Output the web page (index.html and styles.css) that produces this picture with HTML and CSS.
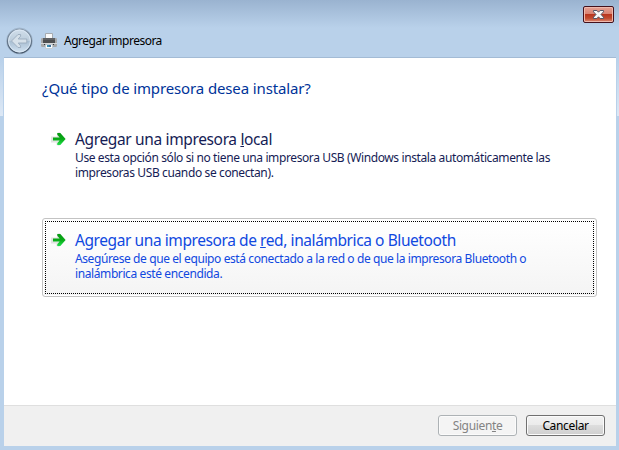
FILE: index.html
```html
<!DOCTYPE html>
<html lang="es">
<head>
<meta charset="utf-8">
<title>Agregar impresora</title>
<link rel="stylesheet" href="styles.css">
</head>
<body>
<div class="window">
  <div class="caption">
    <button class="close" aria-label="Cerrar">
      <svg width="13" height="11" viewBox="0 0 13 11"><path d="M1.500 1.500h3.400l1.600 1.700 1.600-1.700h3.400v1.300L9 5.500l2.500 2.700v1.300H8.100L6.500 7.800 4.900 9.500H1.500V8.200L4 5.500 1.500 2.800z" fill="#f8f8f8" stroke="#535666"/></svg>
    </button>
  </div>
  <header class="header">
    <svg class="back" width="28" height="28" viewBox="0 0 28 28">
      <defs>
        <linearGradient id="disc" x1="0" y1="0" x2="0" y2="1"><stop offset="0" stop-color="#d2dfeb"/><stop offset=".48" stop-color="#bccddc"/><stop offset=".52" stop-color="#a9bfd3"/><stop offset="1" stop-color="#d3e4f3"/></linearGradient>
        <linearGradient id="ring" x1="0" y1="0" x2="0" y2="1"><stop offset="0" stop-color="#8b9cae"/><stop offset="1" stop-color="#44566a"/></linearGradient>
      </defs>
      <circle cx="14.500" cy="14" r="13" fill="none" stroke="#a3b9d0" stroke-width="1"/>
      <circle cx="14.500" cy="14" r="12" fill="url(#disc)" stroke="url(#ring)" stroke-width="1.200"/>
      <circle cx="14.500" cy="14" r="10.900" fill="none" stroke="#dce9f5" stroke-width=".9"/>
      <path d="M6.500 14l6.500-6.500h2.600v1.700L13.200 12h8.600v4h-8.600l2.400 2.800v1.700H13z" fill="#d6e1ea" stroke="#9bacbd" stroke-width=".9"/>
    </svg>
    <svg class="printer" width="16" height="17" viewBox="0 0 16 17">
      <path d="M4.500 6V.5h7V6" fill="#fafafa" stroke="#a6abb0"/>
      <rect x="0" y="5" width="16" height="9" rx="1.200" fill="#a7a9aa"/>
      <rect x="2" y="5" width="12" height="5" fill="#4c4e50"/>
      <path d="M2 6h12" stroke="#737578"/>
      <path d="M0 10.500h16" stroke="#d5d7d8"/>
      <path d="M3 11.500h10" stroke="#35373a"/>
      <path d="M4.500 11.500h7v4h-7z" fill="#f7fbfd" stroke="#c3cbd1"/>
      <path d="M6 12h2v2H6z" fill="#3a91b4"/><path d="M8 12h2v2H8z" fill="#3d6f9b"/>
    </svg>
    <span class="title">Agregar impresora</span>
  </header>
  <main class="page">
    <h1>¿Qué tipo de impresora desea instalar?</h1>
    <div class="option">
      <div class="choice">
        <svg class="arrow" width="16" height="16" viewBox="0 0 16 16"><use href="#arrow"/></svg>
        <div>
          <h2 class="t1">Agregar una impresora <u>l</u>ocal</h2>
          <p><span class="d1">Use esta opción sólo si no tiene una impresora USB (Windows instala automáticamente las</span><br><span class="d2">impresoras USB cuando se conectan).</span></p>
        </div>
      </div>
    </div>
    <div class="option focused">
      <div class="choice">
        <svg class="arrow" width="16" height="16" viewBox="0 0 16 16">
          <defs><linearGradient id="green" x1="0" y1="0" x2="0" y2="1"><stop offset="0" stop-color="#079a13"/><stop offset=".5" stop-color="#08a916"/><stop offset="1" stop-color="#1ee24a"/></linearGradient></defs>
          <g id="arrow">
            <path d="M0 5.500h6V2l2.500-1 6 7-6.500 7-2.500-1v-2.500H0z" fill="#cfd3cf" opacity=".6"/>
            <path d="M2 6.500h6.600L6.300 3.800V2h3L14.600 8l-5.300 6h-3v-1.800l2.300-2.700H2z" fill="url(#green)"/>
          </g>
        </svg>
        <div>
          <h2 class="t2">Agregar una impresora de <u>r</u>ed, inalámbrica o Bluetooth</h2>
          <p><span class="d3">Asegúrese de que el equipo está conectado a la red o de que la impresora Bluetooth o</span><br><span class="d4">inalámbrica esté encendida.</span></p>
        </div>
      </div>
    </div>
  </main>
  <footer class="footer">
    <button class="btn" disabled><span>Siguien<u>t</u>e</span></button>
    <button class="btn"><span>Cancelar</span></button>
  </footer>
</div>
</body>
</html>
```
FILE: styles.css
```css
* { box-sizing: border-box; }
body { margin: 0; font-family: "Noto Sans", "Open Sans", sans-serif; font-size: 12px; overflow: hidden; }
h1, h2, p { margin: 0; font-weight: 400; white-space: nowrap; }
.window {
  width: 619px; height: 450px; padding: 0 3px 4px 4px;
  display: flex; flex-direction: column;
  background:
    linear-gradient(#b9d1ea, #dde8f5) 0 58px / 3px 58px no-repeat,
    linear-gradient(#b9d1ea, #dde8f5) 100% 58px / 2px 58px no-repeat,
    linear-gradient(#9ab3d0 0, #b9d1ea 28px, #b9d1ea 100%);
}
.caption { height: 27px; padding: 6px 2px 0 0; display: flex; justify-content: flex-end; }
.close {
  width: 31px; height: 17px; padding: 0; display: flex; align-items: center; justify-content: center;
  border: 1px solid #43111d; border-radius: 2px;
  box-shadow: inset 0 0 0 1px #efb9ad;
  background: linear-gradient(#e5a195 0, #d98373 45%, #b9361f 50%, #c14b30 75%, #dc8d78 100%);
}
.header { height: 31px; display: flex; align-items: center; padding-left: 1px; border-bottom: 1px solid #a3bbd5; }
.back { margin-top: -2px; }
.printer { margin: -1px 0 0 8px; }
.title { margin: -3px 0 0 7px; color: #000; letter-spacing: -.5px; }
.page { flex: 1; background: #fff; padding: 19px 19px 0 38px; }
h1 { font-size: 15px; line-height: 22px; height: 40px; color: #039; letter-spacing: -.13px; }
.option { height: 79px; border: 1px solid transparent; border-radius: 3px; padding: 2px; margin-bottom: 22px; color: #151c55; }
.choice { height: 73px; border: 1px dotted transparent; display: flex; padding: 7px 0 0 5px; }
.focused { border-color: #c3c3c3; background: linear-gradient(#fff, #f4f4f4); color: #1048e0; box-shadow: inset 0 0 0 1px #fff; }
.focused .choice { border-color: #000; }
.arrow { flex: none; margin: 3px 8px 0 0; }
h2 { font-size: 15.5px; line-height: 22px; }
p { line-height: 15px; }
.t1 { letter-spacing: -.36px; }
.t2 { letter-spacing: -.42px; }
.d1 { letter-spacing: -.39px; }
.d2 { letter-spacing: -.38px; }
.d3, .d4 { letter-spacing: -.4px; }
.footer { height: 41px; background: #f0f0f0; border-top: 1px solid #dfdfdf; display: flex; gap: 9px; justify-content: flex-end; padding: 9px 11px 0 0; }
.btn {
  width: 79px; height: 21px; padding: 0; font: inherit; color: #000; line-height: 18px; letter-spacing: -.35px;
  border: 1px solid #707070; border-radius: 3px; box-shadow: inset 0 0 0 1px #fbfbfb;
  background: linear-gradient(#f2f2f2 0, #ebebeb 49%, #ddd 50%, #cfcfcf 100%);
}
.btn:disabled { color: #838383; border-color: #adb2b5; background: #f4f4f4; }
```
